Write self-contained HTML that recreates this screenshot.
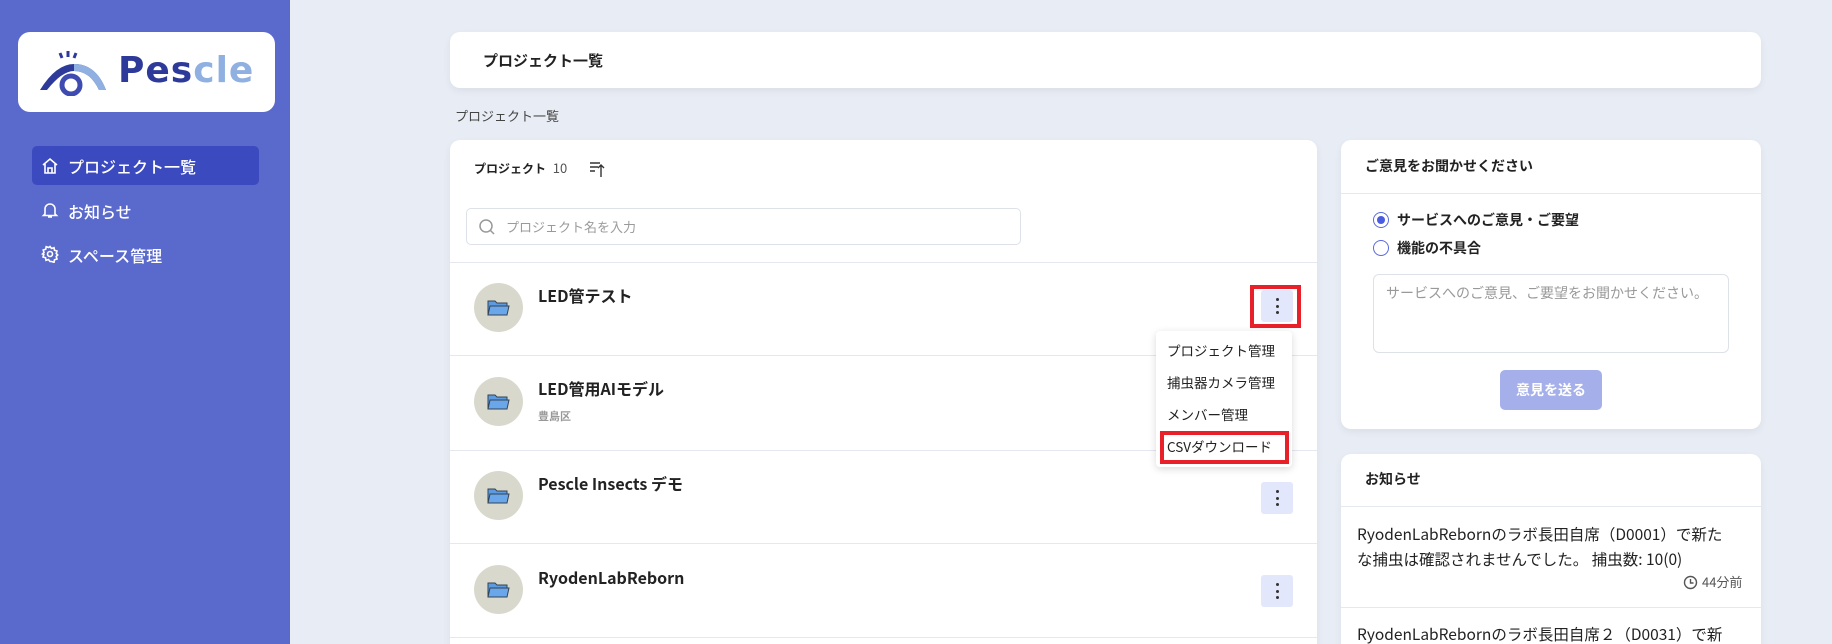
<!DOCTYPE html>
<html style="width:1832px;height:644px;overflow:hidden"><head><meta charset="utf-8"><style>
*{box-sizing:border-box;margin:0;padding:0}
body{width:1832px;height:644px;overflow:hidden;background:#e8ecf4;font-family:"Liberation Sans","Noto Sans CJK JP",sans-serif;color:#222;position:relative}
.abs{position:absolute}
.sb{left:0;top:0;width:290px;height:644px;background:#5a69cc}
.logo{left:18px;top:32px;width:257px;height:80px;background:#fff;border-radius:12px}
.nav{left:32px;width:227px;height:39px;color:#fff;font-size:16px;font-family:"Noto Sans CJK JP",sans-serif;font-weight:500;display:flex;align-items:center;padding-left:36px;border-radius:5px}
.card{background:#fff;border-radius:10px;box-shadow:0 3px 8px rgba(0,0,0,.06)}
.t{white-space:nowrap}
.av{left:474px;width:49px;height:49px;border-radius:50%;background:#d9d8cc}
.nm{left:538px;font-size:16px;font-weight:bold;font-family:"Noto Sans CJK JP",sans-serif}
.kb{left:1261px;width:32px;height:32px;background:#e3e7fb;border-radius:3px}
.kb i{position:absolute;left:14.5px;width:3px;height:3px;border-radius:50%;background:#333}
.hr{height:1px;background:#e5e8ef}
.jp{font-family:"Noto Sans CJK JP",sans-serif}
</style></head><body>
<div class="abs sb"></div>
<div class="abs logo">
<svg class="abs" style="left:20px;top:16px" width="72" height="48" viewBox="0 0 72 48">
<path d="M22 5l2 5M30 3v6M38 5l-2 5" stroke="#2e3a9a" stroke-width="3"/>
<path d="M2 42 Q18 16 36 16 Q58 16 68 42 L61 42 Q52 23 36 23 Q24 23 9 42Z" fill="#2e3a9a"/>
<path d="M36 16 Q58 16 68 42 L61 42 Q52 23 36 23Z" fill="#8fb0e0"/>
<circle cx="33" cy="37" r="9" fill="none" stroke="#3e4bb0" stroke-width="5"/>
</svg>
<div class="abs t" style="left:100px;top:18px;font-size:36px;font-family:'DejaVu Sans',sans-serif;font-weight:bold;letter-spacing:1px;color:#2e3a9a">Pes<span style="color:#8fb0e0">cle</span></div>
</div>
<div class="abs nav" style="top:146px;background:#3c4abf">プロジェクト一覧</div>
<div class="abs nav" style="top:191px">お知らせ</div>
<div class="abs nav" style="top:235px">スペース管理</div>
<svg class="abs" style="left:41px;top:157px" width="18" height="18" viewBox="0 0 18 18" fill="none" stroke="#fff" stroke-width="1.6"><path d="M2 8L9 2l7 6M4 7v9h10V7M7 16v-5h4v5"/></svg>
<svg class="abs" style="left:41px;top:201px" width="18" height="18" viewBox="0 0 18 18" fill="none" stroke="#fff" stroke-width="1.6"><path d="M4 13V8a5 5 0 0110 0v5l1.5 1.5h-13zM7 16h4"/></svg>
<svg class="abs" style="left:41px;top:245px" width="18" height="18" viewBox="0 0 18 18" fill="none" stroke="#fff" stroke-width="1.6"><circle cx="9" cy="9" r="2.5"/><path d="M9 1.5l1.5 2 2.5-.8.5 2.5 2.5.8-.8 2.5 1.5 1.5-1.5 1.5.8 2.5-2.5.8-.5 2.5-2.5-.8L9 16.5l-1.5-2-2.5.8-.5-2.5-2.5-.8.8-2.5L1.5 9l1.5-1.5-.8-2.5 2.5-.8.5-2.5 2.5.8z"/></svg>

<div class="abs card" style="left:450px;top:32px;width:1311px;height:56px"></div>
<div class="abs t jp" style="left:483px;top:50px;font-size:15px;font-weight:bold">プロジェクト一覧</div>
<div class="abs t jp" style="left:455px;top:106px;font-size:13px;color:#444">プロジェクト一覧</div>

<div class="abs card" style="left:450px;top:140px;width:867px;height:520px"></div>
<div class="abs t jp" style="left:474px;top:158px;font-size:12px;font-weight:bold">プロジェクト <span style="font-weight:normal;color:#555;font-size:13px;margin-left:4px">10</span></div>
<svg class="abs" style="left:589px;top:160px" width="18" height="18" viewBox="0 0 18 18" fill="none" stroke="#333" stroke-width="1.4"><path d="M1 3h10M1 7h8M1 11h5M12 17V5M9 8l3-3 3 3"/></svg>
<div class="abs" style="left:466px;top:208px;width:555px;height:37px;border:1px solid #dde1e8;border-radius:5px"></div>
<svg class="abs" style="left:478px;top:218px" width="18" height="18" viewBox="0 0 18 18" fill="none" stroke="#999" stroke-width="1.5"><circle cx="8" cy="8" r="6"/><path d="M12.5 12.5L16 16"/></svg>
<div class="abs t jp" style="left:506px;top:217px;font-size:13px;color:#9a9a9a">プロジェクト名を入力</div>
<div class="abs hr" style="left:450px;top:262px;width:867px"></div>
<div class="abs hr" style="left:450px;top:355px;width:867px"></div>
<div class="abs hr" style="left:450px;top:450px;width:867px"></div>
<div class="abs hr" style="left:450px;top:543px;width:867px"></div>
<div class="abs hr" style="left:450px;top:637px;width:867px"></div>

<div class="abs av" style="top:283px"></div><div class="abs av" style="top:377px"></div><div class="abs av" style="top:471px"></div><div class="abs av" style="top:565px"></div>
<svg class="abs" style="left:486px;top:296px" width="24" height="24" viewBox="0 0 24 24"><path d="M2 5h7l2 2h10v12H2z" fill="#5d9ae0" stroke="#345" stroke-width="1"/><path d="M2 19l2-9h19l-2 9z" fill="#6aa6ea" stroke="#345" stroke-width="1"/></svg>
<svg class="abs" style="left:486px;top:390px" width="24" height="24" viewBox="0 0 24 24"><path d="M2 5h7l2 2h10v12H2z" fill="#5d9ae0" stroke="#345" stroke-width="1"/><path d="M2 19l2-9h19l-2 9z" fill="#6aa6ea" stroke="#345" stroke-width="1"/></svg>
<svg class="abs" style="left:486px;top:484px" width="24" height="24" viewBox="0 0 24 24"><path d="M2 5h7l2 2h10v12H2z" fill="#5d9ae0" stroke="#345" stroke-width="1"/><path d="M2 19l2-9h19l-2 9z" fill="#6aa6ea" stroke="#345" stroke-width="1"/></svg>
<svg class="abs" style="left:486px;top:578px" width="24" height="24" viewBox="0 0 24 24"><path d="M2 5h7l2 2h10v12H2z" fill="#5d9ae0" stroke="#345" stroke-width="1"/><path d="M2 19l2-9h19l-2 9z" fill="#6aa6ea" stroke="#345" stroke-width="1"/></svg>
<div class="abs t nm" style="top:283px">LED管テスト</div>
<div class="abs t nm" style="top:376px">LED管用AIモデル</div>
<div class="abs t jp" style="left:538px;top:408px;font-size:11px;color:#999;font-weight:bold">豊島区</div>
<div class="abs t nm" style="top:471px">Pescle Insects デモ</div>
<div class="abs t nm" style="top:565px">RyodenLabReborn</div>

<div class="abs kb" style="top:290px"><i style="top:8px"></i><i style="top:14.5px"></i><i style="top:21px"></i></div>
<div class="abs" style="left:1250px;top:285px;width:51px;height:43px;border:4px solid #e8202a"></div>
<div class="abs kb" style="top:482px"><i style="top:8px"></i><i style="top:14.5px"></i><i style="top:21px"></i></div>
<div class="abs kb" style="top:575px"><i style="top:8px"></i><i style="top:14.5px"></i><i style="top:21px"></i></div>

<div class="abs" style="left:1156px;top:331px;width:136px;height:136px;background:#fff;border-radius:4px;box-shadow:0 2px 8px rgba(0,0,0,.15)"></div>
<div class="abs t jp" style="left:1167px;top:340px;font-size:13.5px">プロジェクト管理</div>
<div class="abs t jp" style="left:1167px;top:372px;font-size:13.5px">捕虫器カメラ管理</div>
<div class="abs t jp" style="left:1167px;top:404px;font-size:13.5px">メンバー管理</div>
<div class="abs t jp" style="left:1167px;top:436px;font-size:13.5px">CSVダウンロード</div>
<div class="abs" style="left:1160px;top:431px;width:129px;height:33px;border:4px solid #e8202a"></div>

<div class="abs card" style="left:1341px;top:140px;width:420px;height:289px"></div>
<div class="abs t jp" style="left:1365px;top:156px;font-size:14px;font-weight:bold">ご意見をお聞かせください</div>
<div class="abs hr" style="left:1341px;top:193px;width:420px"></div>
<div class="abs" style="left:1373px;top:212px;width:16px;height:16px;border-radius:50%;border:1.5px solid #5a69e0"></div>
<div class="abs" style="left:1377px;top:216px;width:8px;height:8px;border-radius:50%;background:#4a5ce0"></div>
<div class="abs t jp" style="left:1397px;top:210px;font-size:14px;font-weight:bold">サービスへのご意見・ご要望</div>
<div class="abs" style="left:1373px;top:240px;width:16px;height:16px;border-radius:50%;border:1.5px solid #5a69e0"></div>
<div class="abs t jp" style="left:1397px;top:238px;font-size:14px;font-weight:bold">機能の不具合</div>
<div class="abs" style="left:1373px;top:274px;width:356px;height:79px;border:1px solid #dde1e8;border-radius:6px"></div>
<div class="abs t jp" style="left:1386px;top:283px;font-size:14px;color:#999">サービスへのご意見、ご要望をお聞かせください。</div>
<div class="abs jp" style="left:1500px;top:370px;width:102px;height:40px;background:#a5b0ea;border-radius:5px;color:#fff;font-size:14px;font-weight:bold;text-align:center;line-height:40px">意見を送る</div>

<div class="abs card" style="left:1341px;top:454px;width:420px;height:210px"></div>
<div class="abs t jp" style="left:1365px;top:469px;font-size:14px;font-weight:bold">お知らせ</div>
<div class="abs hr" style="left:1341px;top:506px;width:420px"></div>
<div class="abs jp" style="left:1357px;top:522px;width:378px;font-size:15.5px;line-height:25px;color:#222">RyodenLabRebornのラボ長田自席（D0001）で新たな捕虫は確認されませんでした。 捕虫数: 10(0)</div>
<svg class="abs" style="left:1683px;top:575px" width="15" height="15" viewBox="0 0 15 15" fill="none" stroke="#555" stroke-width="1.4"><circle cx="7.5" cy="7.5" r="6"/><path d="M7.5 4v4h3"/></svg>
<div class="abs t jp" style="left:1702px;top:572px;font-size:13px;color:#555">44分前</div>
<div class="abs hr" style="left:1341px;top:607px;width:420px"></div>
<div class="abs t jp" style="left:1357px;top:623px;font-size:15.5px">RyodenLabRebornのラボ長田自席２（D0031）で新</div>
</body></html>
